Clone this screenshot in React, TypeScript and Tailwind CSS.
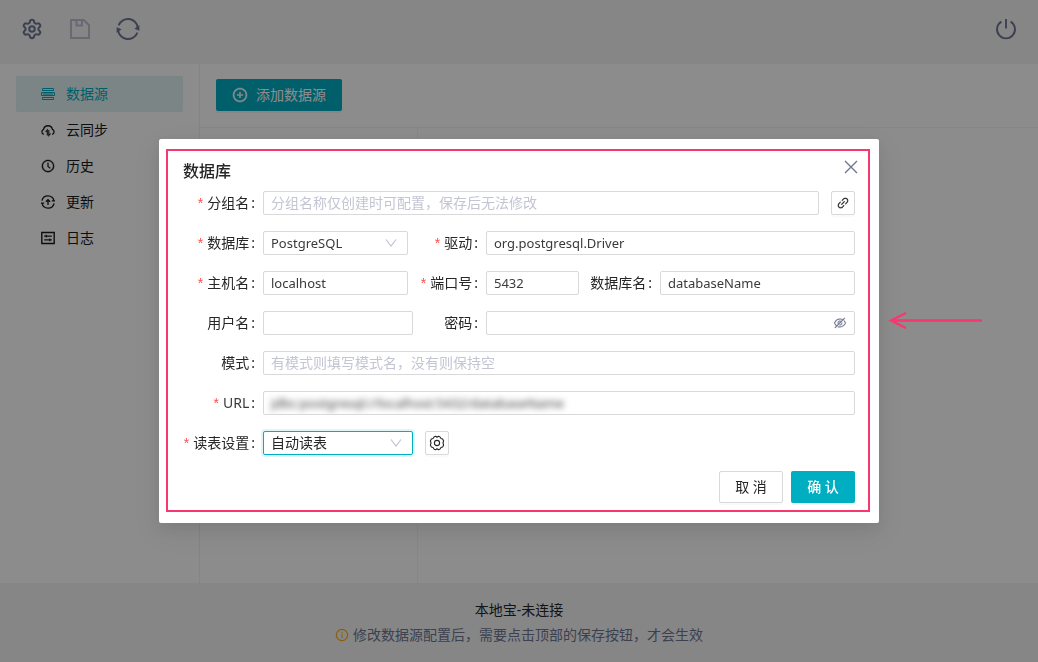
import { useState } from 'react';
import type { ReactNode } from 'react';
import {
  AiOutlineClockCircle,
  AiOutlineEyeInvisible,
  AiOutlineInfoCircle,
  AiOutlineLink,
  AiOutlinePlusCircle
} from 'react-icons/ai';
import { Settings } from 'lucide-react';

const SaveIcon = () => (
  <svg viewBox="0 0 20 20" className="w-5 h-5" fill="none" stroke="currentColor" strokeWidth="2">
    <path d="M1 1h12.8L19 6.2V19H1z" />
    <path d="M6.500 1v5.500h5.500V1" />
  </svg>
);

const SyncIcon = () => (
  <svg viewBox="0 0 24 24" className="w-6 h-6" fill="none" stroke="currentColor" strokeWidth="1.9">
    <path d="M2.600 8.400A10 10 0 0 1 21.900 11" />
    <path d="M21.400 15.600A10 10 0 0 1 2.100 13" />
    <path d="M23.400 8v5.800l-5-2z" fill="currentColor" stroke="none" />
    <path d="M.6 16v-5.800l5 2z" fill="currentColor" stroke="none" />
  </svg>
);

const PowerIcon = () => (
  <svg viewBox="0 0 22 22" className="w-[22px] h-[22px]" fill="none" stroke="currentColor" strokeWidth="1.9">
    <path d="M6.400 3.600a9 9 0 1 0 9.200 0" />
    <path d="M11 1v9.500" />
  </svg>
);

const DataIcon = () => (
  <svg viewBox="0 0 14 14" className="w-[14px] h-[14px]" fill="none" stroke="currentColor">
    <path d="M1.500 1.500h11v2h-11zM.5 5.500h13v3H.5zM1.500 10.500h11v2h-11z" />
    <path d="M2 7h10" strokeWidth="2" opacity=".5" />
  </svg>
);

const CloudIcon = () => (
  <svg viewBox="0 0 14 14" className="w-[14px] h-[14px]" fill="none" stroke="currentColor" strokeWidth="1.300">
    <path d="M2.900 11.400A2.700 2.700 0 0 1 2.600 6.300A4.500 4.500 0 0 1 11.400 6.300A2.700 2.700 0 0 1 11.100 11.400" />
    <path d="M6.300 12.500v-5.500L4.500 9M7.800 7v5.500l1.800-2" strokeWidth="1.100" />
  </svg>
);

const UpdateIcon = () => (
  <svg viewBox="0 0 14 14" className="w-[14px] h-[14px]" fill="none" stroke="currentColor" strokeWidth="1.300">
    <path d="M.9 5.600A6.200 6.200 0 0 1 13 5.800M13.100 8.400A6.200 6.200 0 0 1 1 8.200" />
    <path d="M10.800 5.800H14M0 8.200h3.200" />
    <path d="M7 10V4.800M4.900 6.800 7 4.700l2.100 2.100" />
  </svg>
);

const LogIcon = () => (
  <svg viewBox="0 0 14 14" className="w-[14px] h-[14px]" fill="none" stroke="currentColor" strokeWidth="1.400">
    <path d="M.8 1.500h12.400v11H.8z" />
    <path d="M3.200 5.200h7.600M3.200 8.800h7.600M5.200 3.800v2.800M8.800 7.400v2.800" strokeWidth="1.200" />
  </svg>
);

// six rounded lobes with a ring in the middle
const GearIcon = () => (
  <svg viewBox="0 0 16 16" className="w-4 h-4" fill="none" stroke="currentColor" strokeWidth="1.100" strokeLinejoin="round">
    <path d="M5.200 1.800 6.600 1.300 8 2.300 9.400 1.300 10.800 1.800 12 3.500 13.600 4 14.600 5.800 14 8 14.600 10.200 13.600 12 12 12.500 10.800 14.200 9.400 14.700 8 13.700 6.600 14.700 5.200 14.200 4 12.500 2.400 12 1.400 10.200 2 8 1.400 5.800 2.400 4 4 3.500z" />
    <circle cx="8" cy="8" r="2.600" />
  </svg>
);

const Chevron = () => (
  <svg viewBox="0 0 12 12" className="absolute right-[11px] top-[6px] w-3 h-3 text-[#bfc3d1] pointer-events-none" fill="none" stroke="currentColor" strokeWidth="1.200">
    <path d="M1 2.500 6 9l5-6.500" />
  </svg>
);

const box = 'h-6 min-w-0 rounded-xs border border-[#d9d9d9] bg-white px-[7px] pb-px text-[13px] text-[#3a3a3a] outline-none placeholder:text-sm placeholder:text-[#c3c5d3]';
const squareBtn = 'flex h-6 w-6 shrink-0 items-center justify-center rounded-xs border border-[#d9d9d9] bg-white shadow-[0_2px_0_rgba(0,0,0,0.02)]';

type LabelProps = {
  id: string;
  width?: string;
  required?: boolean;
  children: ReactNode;
};

const Label = ({ id, width = 'w-20', required, children }: LabelProps) => (
  <label htmlFor={id} className={`${width} shrink-0 pr-2 text-right whitespace-nowrap`}>
    {required && <span className="mr-1 text-[#ff4d4f] font-['Liberation_Sans']">*</span>}
    {children}
    <span className="ml-[2px]">:</span>
  </label>
);

const menu = [
  { label: '数据源', icon: <DataIcon />, active: true },
  { label: '云同步', icon: <CloudIcon /> },
  { label: '历史', icon: <AiOutlineClockCircle className="w-[14px] h-[14px] stroke-[24]" /> },
  { label: '更新', icon: <UpdateIcon /> },
  { label: '日志', icon: <LogIcon /> }
];

const DatabaseDialog = () => {
  const [showPassword, setShowPassword] = useState(false);

  return (
    <div className="fixed inset-0 flex items-center justify-center bg-black/45">
      <div role="dialog" aria-labelledby="title" className="relative w-full max-w-[720px] rounded-xs bg-white px-6 py-5 shadow-[0_6px_16px_rgba(0,0,0,0.08),0_9px_28px_8px_rgba(0,0,0,0.05)]">
        <div className="pointer-events-none absolute left-[7px] right-[9px] top-[10px] bottom-[11px] border-2 border-[#f5386f]"></div>

        <div className="flex items-start justify-between mb-2">
          <h2 id="title" className="text-base leading-6 font-medium">数据库</h2>
          <button aria-label="关闭" className="-mr-1 flex h-4 w-4 items-center justify-center text-[#6f7690]">
            <svg viewBox="0 0 14 14" className="w-[14px] h-[14px]" fill="none" stroke="currentColor" strokeWidth="1.400">
              <path d="M1 1l12 12M13 1 1 13" />
            </svg>
          </button>
        </div>

        <form className="flex flex-col gap-4" onSubmit={(e) => e.preventDefault()}>
          <div className="flex items-center">
            <Label id="group" required>分组名</Label>
            <input id="group" className={`${box} flex-1`} placeholder="分组名称仅创建时可配置，保存后无法修改" />
            <button type="button" aria-label="链接" className={`${squareBtn} ml-3`}>
              <AiOutlineLink className="w-[14px] h-[14px] stroke-[12]" />
            </button>
          </div>

          <div className="flex items-center">
            <Label id="type" required>数据库</Label>
            <div className="relative w-[145px]">
              <select id="type" className={`${box} block w-full appearance-none`}>
                <option>PostgreSQL</option>
              </select>
              <Chevron />
            </div>
            <Label id="driver" width="w-[78px]" required>驱动</Label>
            <input id="driver" className={`${box} flex-1`} defaultValue="org.postgresql.Driver" />
          </div>

          <div className="flex items-center">
            <Label id="host" required>主机名</Label>
            <input id="host" className={`${box} w-[145px]`} defaultValue="localhost" />
            <Label id="port" width="w-[78px]" required>端口号</Label>
            <input id="port" className={`${box} w-[93px]`} defaultValue="5432" />
            <Label id="dbname" width="w-[81px]">数据库名</Label>
            <input id="dbname" className={`${box} flex-1`} defaultValue="databaseName" />
          </div>

          <div className="flex items-center">
            <Label id="user">用户名</Label>
            <input id="user" className={`${box} w-[150px]`} />
            <Label id="password" width="w-[73px]">密码</Label>
            <div className={`${box} flex flex-1 items-center`}>
              <input id="password" type={showPassword ? 'text' : 'password'} className="min-w-0 flex-1 outline-none" />
              <button type="button" aria-label="显示密码" className="text-[#6f7690]" onClick={() => setShowPassword(!showPassword)}>
                <AiOutlineEyeInvisible className="w-[14px] h-[14px] stroke-[8]" />
              </button>
            </div>
          </div>

          <div className="flex items-center">
            <Label id="schema">模式</Label>
            <input id="schema" className={`${box} flex-1`} placeholder="有模式则填写模式名，没有则保持空" />
          </div>

          <div className="flex items-center">
            <Label id="url" required><span className="text-[#3a3a3a]">URL</span></Label>
            <div className={`${box} flex flex-1 items-center overflow-hidden`}>
              <input id="url" className="w-full outline-none blur-[3px]" defaultValue="jdbc:postgresql://localhost:5432/databaseName" />
            </div>
          </div>

          <div className="flex items-center">
            <Label id="read" required>读表设置</Label>
            <div className="relative w-[150px]">
              <select id="read" className="block h-6 w-full appearance-none rounded-xs border border-[#00aec2] bg-white px-[7px] outline-none shadow-[0_0_0_2px_rgba(0,174,194,0.12)]">
                <option>自动读表</option>
              </select>
              <Chevron />
            </div>
            <button type="button" aria-label="设置" className={`${squareBtn} ml-3`}>
              <GearIcon />
            </button>
          </div>

          <div className="flex justify-end gap-2">
            <button type="button" className="h-8 w-16 rounded-xs border border-[#d9d9d9] bg-white shadow-[0_2px_0_rgba(0,0,0,0.02)]">取 消</button>
            <button type="submit" className="h-8 w-16 rounded-xs bg-[#00aec2] font-medium text-white shadow-[0_2px_0_rgba(0,0,0,0.04)]">确 认</button>
          </div>
        </form>

        <svg viewBox="0 0 94 18" className="absolute left-full top-[172px] ml-[9px] w-[94px] h-[18px]" fill="none" stroke="#f5386f" strokeWidth="2.500">
          <path d="M3 9.500h91M18 2 3 9.500l15 7.500" />
        </svg>
      </div>
    </div>
  );
};

const App = () => {
  return (
    <div className="flex min-h-screen flex-col bg-white text-sm leading-[22px] text-[#262626] font-['Noto_Sans','Noto_Sans_CJK_SC',sans-serif]">
      <header className="flex h-16 items-start justify-between bg-[#f5f5f5] px-4 pt-[13px] text-[#6d7693]">
        <div className="flex gap-4">
          <button aria-label="设置" className="flex h-8 w-8 items-center justify-center">
            <Settings className="w-[22px] h-[22px]" strokeWidth={2.2} />
          </button>
          <button aria-label="保存" disabled className="flex h-8 w-8 items-center justify-center text-[#bdc0cf]">
            <SaveIcon />
          </button>
          <button aria-label="刷新" className="flex h-8 w-8 items-center justify-center">
            <SyncIcon />
          </button>
        </div>
        <button aria-label="退出" className="flex h-8 w-8 items-center justify-center">
          <PowerIcon />
        </button>
      </header>

      <div className="flex flex-1">
        <nav className="w-[200px] shrink-0 border-r border-[#f0f0f0] px-4 py-3 text-[#1a1a1a]">
          {menu.map((item, index) => (
            <a
              key={index}
              href="#"
              className={`flex h-9 items-center gap-[11px] rounded-xs pl-[25px] ${item.active ? 'bg-[#e0f3f5] text-[#00aec2]' : ''}`}
            >
              {item.icon}
              {item.label}
            </a>
          ))}
        </nav>

        <main className="flex flex-1 flex-col">
          <div className="border-b border-[#f5f5f5] px-4 pt-[15px] pb-4">
            <button className="flex h-8 items-center gap-2 rounded-xs bg-[#00aec2] px-4 text-white shadow-[0_2px_0_rgba(0,0,0,0.04)]">
              <AiOutlinePlusCircle className="w-4 h-4 stroke-[30]" />
              添加数据源
            </button>
          </div>
          <div className="w-[218px] flex-1 border-r border-[#f5f5f5]"></div>
        </main>
      </div>

      <footer className="flex flex-col items-center gap-[3px] bg-[#f5f5f5] pt-4 pb-4">
        <p>本地宝-未连接</p>
        <p className="flex items-center gap-1 text-[#6f7690]">
          <AiOutlineInfoCircle className="w-[14px] h-[14px] stroke-[12] text-[#faad14]" />
          修改数据源配置后，需要点击顶部的保存按钮，才会生效
        </p>
      </footer>

      <DatabaseDialog />
    </div>
  );
};

export default App;
